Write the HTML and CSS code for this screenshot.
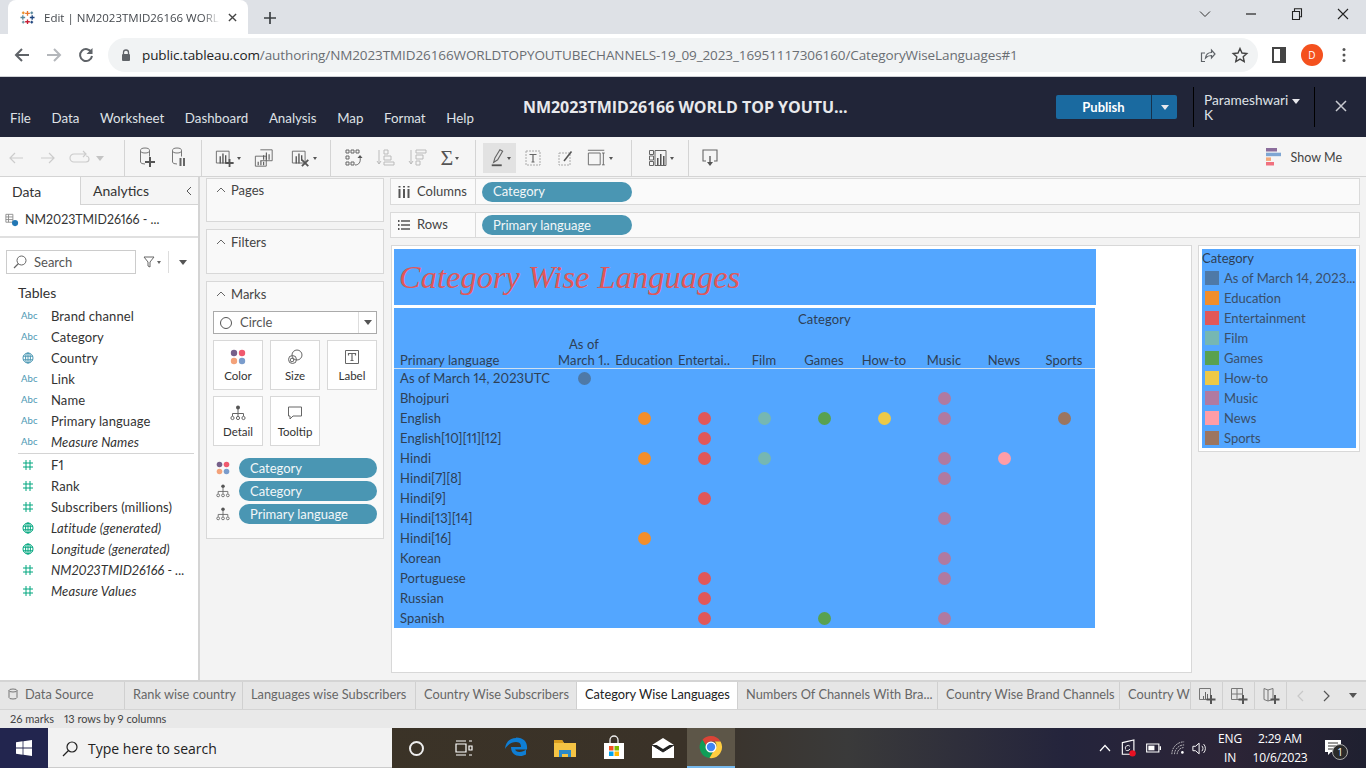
FILE: index.html
```html
<!DOCTYPE html>
<html lang="en">
<head>
<meta charset="utf-8">
<title>Edit | NM2023TMID26166 WORLD TOP YOUTUBE CHANNELS</title>
<link rel="stylesheet" href="styles.css">
</head>
<body>
<svg class="defs" aria-hidden="true">
  <symbol id="i-abc-hash" viewBox="0 0 12 12"><path d="M4 1v10M8 1v10M1 4h10M1 8h10" fill="none" stroke="currentColor" stroke-width="1"/></symbol>
  <symbol id="i-globe" viewBox="0 0 12 12"><g fill="none" stroke="currentColor" stroke-width="1"><circle cx="6" cy="6" r="5"/><ellipse cx="6" cy="6" rx="2.4" ry="5"/><path d="M1 4.200h10M1 7.800h10M6 1v10"/></g></symbol>
  <symbol id="i-color" viewBox="0 0 16 16"><circle cx="4" cy="4" r="3.200" fill="#76608a"/><circle cx="12" cy="4" r="3.200" fill="#f0596e"/><circle cx="4" cy="12" r="3.200" fill="#f3a27a"/><circle cx="12" cy="12" r="3.200" fill="#7a9ccc"/></symbol>
  <symbol id="i-detail" viewBox="0 0 16 16"><g fill="none" stroke="#666" stroke-width="1"><path d="M8 4v4M2.500 11V8.500h11V11M8 8v3"/><circle cx="2.500" cy="13" r="1.600"/><circle cx="8" cy="13" r="1.600"/><circle cx="13.500" cy="13" r="1.600"/></g><circle cx="8" cy="2.500" r="2" fill="#555"/></symbol>
  <symbol id="i-db" viewBox="0 0 16 22"><g fill="none" stroke="#777" stroke-width="1"><ellipse cx="6" cy="3.500" rx="4.500" ry="2.500"/><path d="M1.500 3.500v11.500q0 2 4.500 2M10.500 3.500v6"/></g></symbol>
</svg>

<header class="tabstrip">
  <div class="chrome-tab">
    <svg class="favicon" viewBox="0 0 16 16"><g fill="none" stroke-width="1.400"><path d="M8 1v5M5.500 3.500h5" stroke="#e8762b"/><path d="M8 10v5M5.500 12.500h5" stroke="#c72037"/><path d="M3 5.500v5M.5 8h5" stroke="#5b879b"/><path d="M13 5.500v5M10.500 8h5" stroke="#1f447e"/><path d="M3.500 1.500v3M2 3h3" stroke="#eb912b"/><path d="M12.500 1.500v3M11 3h3" stroke="#59879b"/><path d="M3.500 11.500v3M2 13h3" stroke="#7099a6"/><path d="M12.500 11.500v3M11 13h3" stroke="#1f457e"/></g></svg>
    <span class="chrome-tab-title">Edit | NM2023TMID26166 WORLD TOP YOUTUBE</span>
    <svg class="tab-x" viewBox="0 0 10 10"><path d="M1 1l8 8M9 1l-8 8" stroke="#444" stroke-width="1.500"/></svg>
  </div>
  <svg class="new-tab" viewBox="0 0 12 12"><path d="M6 0v12M0 6h12" stroke="#3c4043" stroke-width="1.700"/></svg>
  <div class="win-controls">
    <svg viewBox="0 0 12 12"><path d="M1 3.500l5 5 5-5" fill="none" stroke="#333"/></svg>
    <svg viewBox="0 0 12 12"><path d="M1 6h10" stroke="#222" stroke-width="1.200"/></svg>
    <svg viewBox="0 0 12 12"><path d="M1.500 3.500h7v8h-7zM3.500 3.500V.8h7v8H8.500" fill="none" stroke="#222" stroke-width="1.100"/></svg>
    <svg viewBox="0 0 12 12"><path d="M1 1l10 10M11 1L1 11" stroke="#222" stroke-width="1.100"/></svg>
  </div>
</header>

<nav class="addressbar">
  <svg class="nav-ic" viewBox="0 0 16 16"><path d="M15 8H2M8 2L2 8l6 6" fill="none" stroke="#5f6368" stroke-width="2"/></svg>
  <svg class="nav-ic" viewBox="0 0 16 16"><path d="M1 8h13M8 2l6 6-6 6" fill="none" stroke="#b4b7bb" stroke-width="2"/></svg>
  <svg class="nav-ic" viewBox="0 0 16 16"><path d="M13.500 5.500A6 6 0 1 0 14 9" fill="none" stroke="#5f6368" stroke-width="2"/><path d="M14.500 1v6h-6z" fill="#5f6368"/></svg>
  <div class="omnibox">
    <svg class="lock" viewBox="0 0 10 12"><path d="M2.500 5V3.500a2.500 2.500 0 0 1 5 0V5" fill="none" stroke="#5f6368" stroke-width="1.300"/><rect x="1" y="5" width="8" height="7" rx="1" fill="#5f6368"/></svg>
    <span class="url"><b>public.tableau.com</b>/authoring/NM2023TMID26166WORLDTOPYOUTUBECHANNELS-19_09_2023_16951117306160/CategoryWiseLanguages#1</span>
    <svg class="share" viewBox="0 0 16 16"><path d="M5 14.500H1.500V6H5M5.500 11c.5-4 3-5.500 6-5.500V3l3.500 4-3.500 4V8.500c-2.500 0-4.500.8-6 2.500z" fill="none" stroke="#5f6368" stroke-width="1.200"/></svg>
    <svg class="star" viewBox="0 0 16 16"><path d="M8 1.500l2 4.500 4.800.5-3.600 3.200 1 4.800L8 12.100l-4.200 2.400 1-4.800L1.200 6.500 6 6z" fill="none" stroke="#444" stroke-width="1.400"/></svg>
  </div>
  <svg class="side-ic" viewBox="0 0 14 16"><path d="M1 1h12v14H1z" fill="none" stroke="#444" stroke-width="2"/><path d="M8 1h5v14H8z" fill="#444"/></svg>
  <span class="avatar">D</span>
  <svg class="kebab" viewBox="0 0 4 16"><circle cx="2" cy="2.500" r="1.500"/><circle cx="2" cy="8" r="1.500"/><circle cx="2" cy="13.500" r="1.500"/></svg>
</nav>

<section class="appbar">
  <nav class="menu"><span>File</span><span>Data</span><span>Worksheet</span><span>Dashboard</span><span>Analysis</span><span>Map</span><span>Format</span><span>Help</span></nav>
  <h1 class="doc-title">NM2023TMID26166 WORLD TOP YOUTU...</h1>
  <div class="publish"><span class="publish-main">Publish</span><span class="publish-drop"><i class="tri tri-white"></i></span></div>
  <div class="user"><span>Parameshwari <i class="tri tri-white"></i></span><span>K</span></div>
  <svg class="app-close" viewBox="0 0 12 12"><path d="M1 1l10 10M11 1L1 11" stroke="#c8cad0" stroke-width="1.500"/></svg>
</section>

<section class="toolbar">
  <div class="tg tg1">
    <span class="tb"><svg viewBox="0 0 16 16"><path d="M15 8H2M7 3L2 8l5 5" fill="none" stroke="#ccc" stroke-width="1.200"/></svg></span>
    <span class="tb"><svg viewBox="0 0 16 16"><path d="M1 8h13M9 3l5 5-5 5" fill="none" stroke="#ccc" stroke-width="1.200"/></svg></span>
    <span class="tb"><svg class="wide" viewBox="0 0 20 16"><path d="M16 4H4a3 3 0 0 0 0 8h12a3 3 0 0 0 0-6M13 1l3 3-3 3" fill="none" stroke="#ccc" stroke-width="1.200"/></svg></span>
    <i class="tri tri-light"></i>
  </div>
  <div class="tg tg2">
    <span class="tb"><svg class="tall" viewBox="0 0 16 22"><use href="#i-db"/><path d="M11 10v10M6 15h10" stroke="#555" stroke-width="2"/></svg></span>
    <span class="tb"><svg class="tall" viewBox="0 0 16 22"><use href="#i-db"/><path d="M9.500 11v8M13 11v8" stroke="#666" stroke-width="2"/></svg></span>
  </div>
  <div class="tg tg3">
    <span class="tb tb-c"><svg class="big" viewBox="0 0 22 22"><path d="M1.500 3.500h14v13h-14z" fill="none" stroke="#666"/><path d="M5 9h1.500v8H5zM8 6h1.500v11H8zM11 8h1.500v9H11z" fill="#555"/><path d="M16 12v9M11.500 16.500h9" stroke="#555" stroke-width="2"/></svg><i class="tri tri-dark"></i></span>
    <span class="tb"><svg class="big" viewBox="0 0 22 22"><path d="M7 2h13v12H7M1.500 9h12v11h-12z" fill="#f5f5f5" stroke="#666"/><path d="M10 8h1.200v5H10zM13 5h1.200v8H13zM16 7h1.200v6H16zM4 15h1.200v4H4zM7 14h1.200v5H7zM10 15h1.200v4H10z" fill="#555"/></svg></span>
    <span class="tb tb-c"><svg class="big" viewBox="0 0 22 22"><path d="M1.500 3.500h14v13h-14z" fill="none" stroke="#666"/><path d="M5 9h1.500v8H5zM8 6h1.500v11H8zM11 8h1.500v6H11z" fill="#555"/><path d="M12 13l7 7M19 13l-7 7" stroke="#555" stroke-width="2"/></svg><i class="tri tri-dark"></i></span>
  </div>
  <div class="tg tg4">
    <span class="tb"><svg class="big" viewBox="0 0 20 20"><g fill="none" stroke="#666"><path d="M2 2h3v3H2zM7 2h3v3H7zM12 2h3v3h-3zM2 8h3v3H2zM2 14h3v3H2zM7 14h3v3H7z"/><path d="M11 17c4 0 6-3 5-8"/></g><path d="M13.500 10l2.500-3 2.500 3z" fill="#555"/></svg></span>
    <span class="tb"><svg class="big" viewBox="0 0 20 20"><g fill="none" stroke="#bbb"><path d="M3 2v14M1 13l2 3 2-3M8 2h4v4H8zM8 8h7v4H8zM8 14h10v3H8z"/></g></svg></span>
    <span class="tb"><svg class="big" viewBox="0 0 20 20"><g fill="none" stroke="#bbb"><path d="M3 2v14M1 13l2 3 2-3M8 2h10v3H8zM8 7h7v4H8zM8 13h4v4H8z"/></g></svg></span>
    <span class="tb tb-c"><span class="sigma">Σ</span><i class="tri tri-dark"></i></span>
  </div>
  <div class="tg tg5">
    <span class="tb tb-on tb-c"><svg class="big" viewBox="0 0 18 22"><path d="M3 16l1.500-5L10 2l3 1.500L7.500 13z" fill="none" stroke="#666" stroke-width="1.200"/><path d="M1 19h11" stroke="#555" stroke-width="2"/></svg><i class="tri tri-dark"></i></span>
    <span class="tb"><svg class="mid" viewBox="0 0 16 16"><path d="M1 1h14v14H1z" fill="none" stroke="#aaa" stroke-dasharray="2 1"/><path d="M4.500 4.500h7M8 4.500V12M6.500 12h3" fill="none" stroke="#666" stroke-width="1.200"/></svg></span>
    <span class="tb"><svg class="mid" viewBox="0 0 16 16"><path d="M1 3h11v12H1z" fill="none" stroke="#aaa" stroke-dasharray="2 1"/><path d="M6 11L13.500 1.500" stroke="#555" stroke-width="1.600"/></svg></span>
    <span class="tb tb-c tb-fit"><svg class="big" viewBox="0 0 22 20"><path d="M1 1.500h18" stroke="#666"/><path d="M1.500 4.500h13v13h-13zM18 4.500v13M16.500 4.500h3M16.500 17.500h3" fill="none" stroke="#666"/></svg><i class="tri tri-dark"></i></span>
  </div>
  <div class="tg tg6">
    <span class="tb tb-c"><svg class="big" viewBox="0 0 20 20"><path d="M1.500 2.500h4v4h-4zM1.500 8h4v4h-4zM1.500 13.500h4v4h-4zM7 2.500h11v15H7z" fill="none" stroke="#666"/><path d="M9 10h1.500v7H9zM12 6h1.500v11H12zM15 8h1.500v9H15z" fill="#555"/></svg><i class="tri tri-dark"></i></span>
  </div>
  <div class="tg tg7">
    <span class="tb"><svg class="big" viewBox="0 0 20 20"><path d="M5 13H2V2h14v11h-3" fill="none" stroke="#666" stroke-width="1.100"/><path d="M9 8v8" stroke="#666" stroke-width="1.500"/><path d="M6 14h6l-3 4z" fill="#555"/></svg></span>
  </div>
  <div class="showme">
    <svg viewBox="0 0 16 18"><path d="M0 0h11v3.500H0z" fill="#8b6d9c"/><path d="M0 4.700h15v3.500H0z" fill="#7ea6d3"/><path d="M0 9.400h5v3.500H0z" fill="#f3a87a"/><path d="M0 14h8v3.500H0z" fill="#f0707e"/></svg>
    <span>Show Me</span>
  </div>
</section>

<main class="workspace">
  <aside class="datapane">
    <div class="pane-tabs">
      <span class="pane-tab pane-tab-on">Data</span>
      <span class="pane-tab">Analytics<svg class="collapse" viewBox="0 0 6 10"><path d="M5 1L1 5l4 4" fill="none" stroke="#555"/></svg></span>
    </div>
    <div class="source">
      <svg viewBox="0 0 16 16"><g fill="none" stroke="#888"><path d="M1 1.500h8v9H1z"/><path d="M1 4.500h8M1 7.500h8M4 1.500v9"/></g><circle cx="11.500" cy="11.500" r="3.500" fill="#2277b4"/></svg>
      <span>NM2023TMID26166 - ...</span>
    </div>
    <div class="searchrow">
      <div class="searchbox">
        <svg viewBox="0 0 14 14"><circle cx="8.500" cy="5.500" r="4.500" fill="none" stroke="#666"/><path d="M5.500 8.500L1 13" stroke="#666" stroke-width="1.300"/></svg>
        <span>Search</span>
      </div>
      <svg class="funnel" viewBox="0 0 12 12"><path d="M1 1h10L7 6v5L5 10V6z" fill="none" stroke="#666"/></svg>
      <i class="tri tri-small"></i>
      <span class="vsep"></span>
      <i class="tri tri-dark2"></i>
    </div>
    <div class="tables">Tables</div>
    <ul class="fields">
      <li><span class="abc">Abc</span>Brand channel</li>
      <li><span class="abc">Abc</span>Category</li>
      <li><svg class="ficon blue"><use href="#i-globe"/></svg>Country</li>
      <li><span class="abc">Abc</span>Link</li>
      <li><span class="abc">Abc</span>Name</li>
      <li><span class="abc">Abc</span>Primary language</li>
      <li class="gen"><span class="abc">Abc</span>Measure Names</li>
    </ul>
    <ul class="fields fields-m">
      <li><svg class="ficon green"><use href="#i-abc-hash"/></svg>F1</li>
      <li><svg class="ficon green"><use href="#i-abc-hash"/></svg>Rank</li>
      <li><svg class="ficon green"><use href="#i-abc-hash"/></svg>Subscribers (millions)</li>
      <li class="gen"><svg class="ficon green"><use href="#i-globe"/></svg>Latitude (generated)</li>
      <li class="gen"><svg class="ficon green"><use href="#i-globe"/></svg>Longitude (generated)</li>
      <li class="gen"><svg class="ficon green"><use href="#i-abc-hash"/></svg>NM2023TMID26166 - ...</li>
      <li class="gen"><svg class="ficon green"><use href="#i-abc-hash"/></svg>Measure Values</li>
    </ul>
  </aside>

  <div class="cards">
    <section class="card card-pages"><h2><svg viewBox="0 0 10 6"><path d="M1 5l4-4 4 4" fill="none" stroke="#666"/></svg>Pages</h2></section>
    <section class="card card-filters"><h2><svg viewBox="0 0 10 6"><path d="M1 5l4-4 4 4" fill="none" stroke="#666"/></svg>Filters</h2></section>
    <section class="card card-marks">
      <h2><svg viewBox="0 0 10 6"><path d="M1 5l4-4 4 4" fill="none" stroke="#666"/></svg>Marks</h2>
      <div class="marktype"><span class="ring"></span><span class="marktype-l">Circle</span><span class="marktype-d"><i class="tri tri-dark2"></i></span></div>
      <div class="markbtns">
        <div class="markbtn"><svg viewBox="0 0 16 16"><use href="#i-color"/></svg>Color</div>
        <div class="markbtn"><svg viewBox="0 0 16 16"><g fill="none" stroke="#666"><circle cx="10" cy="6" r="5"/><circle cx="5.500" cy="10.500" r="4"/><circle cx="5" cy="11" r="1.800"/></g></svg>Size</div>
        <div class="markbtn"><svg viewBox="0 0 16 16"><path d="M1.500 1.500h13v13h-13z" fill="none" stroke="#666"/><path d="M4.500 6.500v-2h7v2M8 4.500v7M6.500 11.500h3" fill="none" stroke="#666" stroke-width="1.200"/></svg>Label</div>
        <div class="markbtn"><svg viewBox="0 0 16 16"><use href="#i-detail"/></svg>Detail</div>
        <div class="markbtn"><svg viewBox="0 0 16 16"><path d="M1.500 2h13v9H6l-3 3v-3H1.500z" fill="none" stroke="#666"/></svg>Tooltip</div>
      </div>
      <div class="encodings">
        <div class="encoding"><svg viewBox="0 0 16 16"><use href="#i-color"/></svg><span class="pill">Category</span></div>
        <div class="encoding"><svg viewBox="0 0 16 16"><use href="#i-detail"/></svg><span class="pill">Category</span></div>
        <div class="encoding"><svg viewBox="0 0 16 16"><use href="#i-detail"/></svg><span class="pill">Primary language</span></div>
      </div>
    </section>
  </div>

  <div class="sheet">
    <div class="shelf shelf-cols">
      <div class="shelf-l"><svg viewBox="0 0 12 12"><path d="M1.500 3v9M6 3v9M10.500 3v9" stroke="#555" stroke-width="2"/><path d="M.5 0h2v1.500h-2zM5 0h2v1.500H5zM9.500 0h2v1.500h-2z" fill="#555"/></svg><span>Columns</span></div>
      <span class="pill pill-shelf">Category</span>
    </div>
    <div class="shelf shelf-rows">
      <div class="shelf-l"><svg viewBox="0 0 12 12"><path d="M3 2h9M3 6h9M3 10h9" stroke="#555" stroke-width="1.500"/><path d="M0 1h1.500v2H0zM0 5h1.500v2H0zM0 9h1.500v2H0z" fill="#555"/></svg><span>Rows</span></div>
      <span class="pill pill-shelf">Primary language</span>
    </div>
    <div class="stage">
      <div class="view">
        <div class="title-band"><span>Category Wise Languages</span></div>
        <div class="viz">
          <div class="viz-top">Category</div>
          <div class="viz-head">
            <span class="rowhead">Primary language</span>
            <span>As of<br>March 1..</span><span>Education</span><span>Entertai..</span><span>Film</span><span>Games</span><span>How-to</span><span>Music</span><span>News</span><span>Sports</span>
          </div>
          <div class="vrow"><span class="rowhead">As of March 14, 2023UTC</span><i class="dot c1 k-asof"></i></div>
          <div class="vrow"><span class="rowhead">Bhojpuri</span><i class="dot c7 k-music"></i></div>
          <div class="vrow"><span class="rowhead">English</span><i class="dot c2 k-edu"></i><i class="dot c3 k-ent"></i><i class="dot c4 k-film"></i><i class="dot c5 k-games"></i><i class="dot c6 k-howto"></i><i class="dot c7 k-music"></i><i class="dot c9 k-sports"></i></div>
          <div class="vrow"><span class="rowhead">English[10][11][12]</span><i class="dot c3 k-ent"></i></div>
          <div class="vrow"><span class="rowhead">Hindi</span><i class="dot c2 k-edu"></i><i class="dot c3 k-ent"></i><i class="dot c4 k-film"></i><i class="dot c7 k-music"></i><i class="dot c8 k-news"></i></div>
          <div class="vrow"><span class="rowhead">Hindi[7][8]</span><i class="dot c7 k-music"></i></div>
          <div class="vrow"><span class="rowhead">Hindi[9]</span><i class="dot c3 k-ent"></i></div>
          <div class="vrow"><span class="rowhead">Hindi[13][14]</span><i class="dot c7 k-music"></i></div>
          <div class="vrow"><span class="rowhead">Hindi[16]</span><i class="dot c2 k-edu"></i></div>
          <div class="vrow"><span class="rowhead">Korean</span><i class="dot c7 k-music"></i></div>
          <div class="vrow"><span class="rowhead">Portuguese</span><i class="dot c3 k-ent"></i><i class="dot c7 k-music"></i></div>
          <div class="vrow"><span class="rowhead">Russian</span><i class="dot c3 k-ent"></i></div>
          <div class="vrow"><span class="rowhead">Spanish</span><i class="dot c3 k-ent"></i><i class="dot c5 k-games"></i><i class="dot c7 k-music"></i></div>
        </div>
      </div>
      <aside class="legend">
        <div class="legend-in">
          <div class="legend-t">Category</div>
          <div class="lrow"><i class="k-asof"></i>As of March 14, 2023...</div>
          <div class="lrow"><i class="k-edu"></i>Education</div>
          <div class="lrow"><i class="k-ent"></i>Entertainment</div>
          <div class="lrow"><i class="k-film"></i>Film</div>
          <div class="lrow"><i class="k-games"></i>Games</div>
          <div class="lrow"><i class="k-howto"></i>How-to</div>
          <div class="lrow"><i class="k-music"></i>Music</div>
          <div class="lrow"><i class="k-news"></i>News</div>
          <div class="lrow"><i class="k-sports"></i>Sports</div>
        </div>
      </aside>
    </div>
  </div>
</main>

<section class="sheettabs">
  <div class="stab s1"><svg viewBox="0 0 10 12"><path d="M1 2.500v7q0 1.500 4 1.500t4-1.500v-7M1 2.500q0-1.500 4-1.500t4 1.500-4 1.500-4-1.500z" fill="none" stroke="#777"/></svg>Data Source</div>
  <div class="stab s2">Rank wise country</div>
  <div class="stab s3">Languages wise Subscribers</div>
  <div class="stab s4">Country Wise Subscribers</div>
  <div class="stab s5 stab-on">Category Wise Languages</div>
  <div class="stab s6">Numbers Of Channels With Bra...</div>
  <div class="stab s7">Country Wise Brand Channels</div>
  <div class="stab s8">Country Wi</div>
  <div class="stab-ic"><svg viewBox="0 0 18 18"><path d="M1.500 1.500h11v11h-11z" fill="none" stroke="#777"/><path d="M5 9h1v3H5zM7 5h1v7H7zM9 7h1v5H9z" fill="#666"/><path d="M13 8v9M8.500 12.500h9" stroke="#555" stroke-width="2"/></svg></div>
  <div class="stab-ic"><svg viewBox="0 0 18 18"><path d="M1.500 1.500h11v11h-11zM1.500 7h11M7 1.500v11" fill="none" stroke="#777"/><path d="M13 8v9M8.500 12.500h9" stroke="#555" stroke-width="2"/></svg></div>
  <div class="stab-ic"><svg viewBox="0 0 18 18"><path d="M2 1.500l4 1.500 5-1.500v11l-5 1.500-4-1.500zM6 3v11" fill="none" stroke="#777"/><path d="M13 8v9M8.500 12.500h9" stroke="#555" stroke-width="2"/></svg></div>
  <svg class="tab-nav nav-a" viewBox="0 0 7 12"><path d="M6 1L1 6l5 5" fill="none" stroke="#c8c8c8" stroke-width="1.200"/></svg>
  <svg class="tab-nav nav-b" viewBox="0 0 7 12"><path d="M1 1l5 5-5 5" fill="none" stroke="#555" stroke-width="1.200"/></svg>
  <i class="tri tri-dark2 tab-more"></i>
</section>
<footer class="statusbar"><span>26 marks</span><span>13 rows by 9 columns</span></footer>

<section class="taskbar">
  <div class="start"><svg viewBox="0 0 16 16"><path d="M0 2.200l6.600-.9v6.300H0zM7.400 1.200L16 0v7.600H7.400zM0 8.400h6.600v6.300L0 13.800zM7.400 8.400H16V16l-8.600-1.200z" fill="#fff"/></svg></div>
  <div class="tsearch"><svg viewBox="0 0 16 16"><circle cx="10" cy="6" r="5" fill="none" stroke="#222" stroke-width="1.200"/><path d="M6.500 9.500L1 15" stroke="#222" stroke-width="1.300"/></svg><span>Type here to search</span></div>
  <div class="tapp tapp-sys"><span class="cortana"></span></div>
  <div class="tapp tapp-sys tapp-last"><svg class="t20" viewBox="0 0 18 18"><path d="M1 2h10M1 16h10M1 5h10v8H1zM14 2h3M14 7h3v4h-3zM14 16h3" fill="none" stroke="#fff" stroke-width="1.200"/></svg></div>
  <div class="tapp"><svg class="t26" viewBox="0 0 24 24"><path d="M12 2C5 2 1.500 7 1 13c3-5 7-7 11-7 4.500 0 5 3 5 5H7c0 6 4 9 9 9 2.500 0 4.500-.6 6-1.500v-5c-1.500 1.500-4 2.500-6.500 2.500s-4-1-4.300-2.500H23c.8-7-3-12-11-12z" fill="#0f7ed4"/></svg></div>
  <div class="tapp"><svg class="t26" viewBox="0 0 24 24"><path d="M1 4h8l2 3h12v14H1z" fill="#f4c344"/><path d="M1 4h8l2 3H1z" fill="#d99c1e"/><path d="M6 21v-7h12v7h-3v-3H9v3z" fill="#2a89c9"/></svg></div>
  <div class="tapp"><svg class="t26" viewBox="0 0 24 24"><path d="M8 7V4a4 4 0 0 1 8 0v3" fill="none" stroke="#eee" stroke-width="1.300"/><path d="M2 7h20v16H2z" fill="#fff"/><path d="M7 10h4.500v4.500H7z" fill="#f25022"/><path d="M12.500 10H17v4.500h-4.500z" fill="#7fba00"/><path d="M7 15.500h4.500V20H7z" fill="#00a4ef"/><path d="M12.500 15.500H17V20h-4.500z" fill="#ffb900"/></svg></div>
  <div class="tapp"><svg class="t26" viewBox="0 0 24 24"><path d="M1 9l11-7 11 7v13H1z" fill="#fff"/><path d="M1 9l11 7 11-7" fill="#222" stroke="#222"/><path d="M4 8l8-5 8 5-8 5z" fill="#fff"/></svg></div>
  <div class="tapp tapp-chrome">
    <svg class="t26" viewBox="0 0 24 24"><path d="M12 1a11 11 0 0 1 9.500 5.500H12a5.500 5.500 0 0 0-5.200 3.700L3.500 4.700A11 11 0 0 1 12 1z" fill="#db4437"/><path d="M3.500 4.700L8.200 13a5.500 5.500 0 0 0 5.500 4.300L10.500 23A11 11 0 0 1 3.500 4.700z" fill="#0f9d58"/><path d="M21.500 6.500A11 11 0 0 1 10.500 23l4.700-8a5.500 5.500 0 0 0 .6-8.500z" fill="#ffcd40"/><circle cx="12" cy="12" r="5.500" fill="#fff"/><circle cx="12" cy="12" r="4.200" fill="#4285f4"/></svg>
  </div>
  <div class="tray">
    <svg class="t-up" viewBox="0 0 12 8"><path d="M1 7l5-5.500L11 7" fill="none" stroke="#fff" stroke-width="1.200"/></svg>
    <svg class="t-sync" viewBox="0 0 18 20"><path d="M1.500 4l13-3v16h-13z" fill="none" stroke="#fff" stroke-width="1.300"/><path d="M5 11a3 3 0 0 1 5-3M10 11a3 3 0 0 1-5 1" fill="none" stroke="#fff"/><circle cx="13" cy="16" r="3.600" fill="#e81123"/></svg>
    <svg class="t-batt" viewBox="0 0 16 10"><path d="M.7.7h13v8.600H.7z" fill="none" stroke="#fff" stroke-width="1.200"/><path d="M2.500 2.500H9v5H2.500z" fill="#fff"/><path d="M14.500 3H16v4h-1.500z" fill="#fff"/></svg>
    <svg class="t-wifi" viewBox="0 0 16 16"><g fill="none" stroke="#ddd" stroke-width="1"><path d="M1 15A14 14 0 0 1 15 1M4 15A11 11 0 0 1 15 4.500M7 15a8 8 0 0 1 8-7.500" stroke-dasharray="2 1"/></g><circle cx="13" cy="13" r="1.500" fill="#fff"/></svg>
    <svg class="t-vol" viewBox="0 0 18 16"><path d="M1 5.500h3L8 2v12l-4-3.500H1z" fill="none" stroke="#fff" stroke-width="1.100"/><path d="M11 5a4 4 0 0 1 0 6M13 3a7 7 0 0 1 0 10" fill="none" stroke="#fff"/></svg>
    <div class="t-lang"><span>ENG</span><span>IN</span></div>
    <div class="t-clock"><span>2:29 AM</span><span>10/6/2023</span></div>
    <div class="t-notif"><svg viewBox="0 0 16 16"><path d="M0 0h16v12H6l-3 3v-3H0z" fill="#fff"/><path d="M3 3h10M3 6h10M3 9h7" stroke="#333"/></svg><span class="t-badge">1</span></div>
  </div>
</section>
</body>
</html>
```
FILE: styles.css
```css
* { box-sizing: border-box; }
html, body { margin: 0; padding: 0; }
body {
  width: 1366px; height: 768px; overflow: hidden;
  display: flex; flex-direction: column;
  font-family: "Lato", "Open Sans", sans-serif; font-size: 13px; color: #333; background: #fff;
  font-variant-numeric: proportional-nums;
}
.defs { display: none; }
ul { list-style: none; margin: 0; padding: 0; }
h1, h2 { margin: 0; font-weight: 400; }
i { font-style: normal; }
svg { display: block; flex: none; overflow: visible; }

/* triangles */
.tri { display: inline-block; width: 0; height: 0; border-style: solid; border-color: transparent; border-width: 4px 4px 0; flex: none; }
.tri-white { border-top-color: #e8e8ec; vertical-align: middle; border-width: 5px 4.500px 0; }
.tri-light { border-top-color: #c4c4c4; border-width: 5px 4px 0; }
.tri-dark { border-top-color: #555; border-width: 3px 2.500px 0; }
.tri-dark2 { border-top-color: #555; border-width: 5px 4.500px 0; }
.tri-small { border-top-color: #666; border-width: 3px 2.500px 0; margin-left: 2px; }

/* browser chrome */
.tabstrip { height: 34px; flex: none; background: #dee1e6; display: flex; align-items: flex-end; position: relative; padding-left: 8px; }
.chrome-tab { width: 240px; height: 34px; background: #fff; border-radius: 8px 8px 0 0; display: flex; align-items: center; padding-left: 12px; font: 11.500px "Open Sans", sans-serif; color: #45494e; }
.favicon { width: 15px; height: 15px; margin-right: 9px; flex: none; }
.chrome-tab-title { width: 176px; overflow: hidden; white-space: nowrap; -webkit-mask-image: linear-gradient(90deg, #000 90%, transparent); mask-image: linear-gradient(90deg, #000 90%, transparent); }
.tab-x { width: 9px; height: 9px; margin-left: 8px; }
.new-tab { width: 12px; height: 12px; margin: 0 0 10px 16px; }
.win-controls { margin-left: auto; display: flex; align-self: flex-start; padding-top: 8px; }
.win-controls svg { width: 12px; height: 12px; margin: 0 17px; }
.addressbar { height: 43px; flex: none; background: #fff; border-bottom: 1px solid #d0d2d6; display: flex; align-items: center; padding-left: 14px; }
.nav-ic { width: 16px; height: 16px; margin-right: 16px; }
.omnibox { margin-left: -2px; width: 1150px; height: 34px; border-radius: 17px; background: #f1f3f4; display: flex; align-items: center; padding-left: 13px; flex: none; }
.lock { width: 10px; height: 12px; margin-right: 11px; flex: none; }
.url { font: 13.500px "Open Sans", sans-serif; color: #6a6e73; white-space: nowrap; letter-spacing: -.1px; width: 1040px; overflow: hidden; flex: none; }
.url b { font-weight: 400; color: #222; }
.share { width: 16px; height: 16px; margin-left: 18px; }
.star { width: 16px; height: 16px; margin-left: 16px; }
.side-ic { width: 14px; height: 16px; margin-left: 14px; }
.avatar { width: 22px; height: 22px; border-radius: 50%; background: #f4511e; color: #fff; font: 10px "Open Sans", sans-serif; display: flex; align-items: center; justify-content: center; margin-left: 15px; flex: none; }
.kebab { width: 4px; height: 16px; margin-left: 19px; fill: #555; }

/* tableau header */
.appbar { height: 60px; flex: none; background: #212538; display: flex; position: relative; color: #dfe1e6; }
.menu { display: flex; gap: 20.700px; padding: 33px 0 0 10px; font-size: 13.300px; width: 523px; flex: none; }
.menu span { white-space: nowrap; }
.doc-title { font: 700 16px "Open Sans", sans-serif; color: #e8e9ec; padding-top: 19px; white-space: nowrap; width: 533px; flex: none; letter-spacing: -.04px; }
.publish { display: flex; height: 24px; margin-top: 18px; border-radius: 2px; overflow: hidden; background: #1a6aa0; color: #fff; font-weight: 700; flex: none; }
.publish-main { width: 96px; display: flex; align-items: center; justify-content: center; border-right: 1px solid #16324c; }
.publish-drop { width: 25px; display: flex; align-items: center; justify-content: center; }
.user { margin: 10px 0 0 16px; height: 40px; width: 122px; border: 1px solid #000; border-width: 0 1px; padding-left: 10px; font-size: 13.700px; line-height: 15px; display: flex; flex-direction: column; justify-content: center; white-space: nowrap; flex: none; }
.app-close { width: 12px; height: 12px; margin: 23px 0 0 20px; }

.toolbar { height: 40px; flex: none; background: #f5f5f5; display: flex; align-items: stretch; border-bottom: 1px solid #d4d4d4; padding-top: 3px; }
.tg { display: flex; align-items: center; border-right: 1px solid #d4d4d4; flex: none; }
.tg1 { width: 125px; }
.tg2 { width: 77px; padding-left: 6px; }
.tg3 { width: 129px; padding-left: 5px; }
.tg4 { width: 145px; padding-left: 7px; }
.tg5 { width: 156px; padding-left: 7px; }
.tg6 { width: 57px; padding-left: 7px; }
.tg7 { width: 50px; padding-left: 6px; border-right: 0; }
.tb { width: 32px; height: 30px; display: flex; align-items: center; justify-content: center; flex: none; }
.tb svg { width: 16px; height: 16px; }
.tb svg.wide { width: 20px; height: 16px; }
.tb svg.tall { width: 16px; height: 22px; }
.tb svg.big { width: 20px; height: 20px; }
.tb svg.mid { width: 16px; height: 16px; }
.tb-c .tri { margin-left: 2px; }
.tb-on.tb-c .tri { margin-left: -2px; }
.tg3 .tb { width: 38px; }
.tg3 .tb-c { padding-left: 3px; }
.tg5 .tb { width: 33px; }
.tg5 .tb-fit { padding-left: 3px; }
.tg6 .tb { width: 44px; }
.tb-on { background: #e2e2e2; }
.sigma { font: 22px "Liberation Serif", serif; color: #555; }
.showme { margin-left: auto; display: flex; align-items: center; gap: 9px; padding: 0 24px 2px 0; font-size: 12.500px; color: #444; }
.showme svg { width: 16px; height: 18px; }

/* main */
.workspace { height: 503px; flex: none; display: flex; background: #f3f3f3; overflow: hidden; }
.datapane { width: 200px; flex: none; background: #fff; border-right: 2px solid #d4d4d4; }
.pane-tabs { display: flex; height: 28px; font-size: 14px; }
.pane-tab { display: flex; align-items: center; }
.pane-tab:first-child { width: 80px; padding-left: 12px; }
.pane-tab:last-child { flex: 1; padding-left: 12px; background: #f5f5f5; border-left: 1px solid #d4d4d4; border-bottom: 1px solid #d4d4d4; position: relative; }
.collapse { width: 6px; height: 10px; position: absolute; right: 6px; top: 9px; }
.source { height: 33px; display: flex; align-items: center; gap: 6px; padding: 0 0 2px 5px; border-bottom: 2px solid #e0e0e0; font-size: 12.400px; }
.source svg { width: 14px; height: 14px; }
.searchrow { height: 24px; margin-top: 12px; padding-left: 6px; display: flex; align-items: center; }
.searchbox { width: 130px; height: 24px; border: 1px solid #ccc; display: flex; align-items: center; gap: 7px; padding-left: 6px; color: #555; }
.searchbox svg { width: 14px; height: 14px; }
.funnel { width: 12px; height: 12px; margin-left: 7px; }
.vsep { width: 1px; height: 22px; background: #ddd; margin: 0 10px 0 7px; }
.tables { font-size: 14px; padding: 10px 0 0 18px; height: 31px; }
.fields { margin-left: 18px; margin-right: 4px; letter-spacing: .1px; }
.fields li { height: 21px; display: flex; align-items: center; white-space: nowrap; }
.fields li.gen { font-style: italic; }
.fields-m { border-top: 1px solid #d4d4d4; margin-top: 1px; }
.abc { width: 33px; font-size: 9.500px; color: #4a97b3; padding-left: 3px; font-style: normal; flex: none; }
.ficon { width: 12px; height: 12px; margin: 0 17px 0 4px; }
.blue { color: #4a97b3; }
.green { color: #00a67e; }

.cards { width: 178px; flex: none; margin: 1px 0 0 6px; display: flex; flex-direction: column; gap: 7px; }
.card { background: #f9f9f9; border: 1px solid #d8d8d8; }
.card-pages { height: 44px; }
.card-filters { height: 45px; }
.card h2 { font-size: 13px; height: 22px; display: flex; align-items: center; gap: 5px; padding: 0 0 0 9px; color: #444; }
.card-filters h2, .card-marks h2 { padding-top: 2px; }
.card h2 svg { width: 10px; height: 6px; }
.card-marks { height: 258px; padding: 0 6px; }
.card-marks h2 { margin: 0 -6px 7px; }
.marktype { height: 23px; border: 1px solid #aaa; background: #fff; display: flex; align-items: center; }
.ring { width: 12px; height: 12px; border: 1px solid #555; border-radius: 50%; margin-left: 6px; }
.marktype-l { margin-left: 8px; flex: 1; color: #555; padding-bottom: 1px; }
.marktype-d { width: 18px; height: 21px; border-left: 1px solid #ddd; display: flex; align-items: center; justify-content: center; }
.markbtns { display: grid; grid-template-columns: repeat(3, 50px); gap: 6px 7px; margin-top: 6px; }
.markbtn { height: 50px; background: #fff; border: 1px solid #d8d8d8; display: flex; flex-direction: column; align-items: center; gap: 4px; padding-top: 8px; font-size: 11.500px; }
.markbtn svg { width: 16px; height: 16px; }
.encodings { margin-top: 12px; display: flex; flex-direction: column; gap: 3px; }
.encoding { display: flex; align-items: center; gap: 9px; padding-left: 3px; }
.encoding svg { width: 14px; height: 14px; }
.pill { width: 138px; height: 20px; border-radius: 10px; background: #4a96b3; color: #f2f6f8; padding-left: 11px; display: flex; align-items: center; flex: none; white-space: nowrap; }

.sheet { flex: 1; margin: 1px 6px 0 6px; display: flex; flex-direction: column; min-width: 0; }
.shelf { background: #fafafa; border: 1px solid #dadada; display: flex; align-items: center; }
.shelf-cols { height: 27px; margin-bottom: 7px; }
.shelf-rows { height: 26px; margin-bottom: 7px; }
.shelf-l { width: 85px; align-self: stretch; display: flex; align-items: center; gap: 7px; padding-left: 7px; border-right: 1px solid #dadada; color: #444; }
.shelf-l span { padding-bottom: 2px; }
.shelf-l svg { width: 12px; height: 12px; }
.pill-shelf { width: 150px; margin-left: 6px; padding-bottom: 1px; }
.stage { display: flex; gap: 6px; align-items: flex-start; padding-left: 1px; }
.view { width: 801px; height: 428px; background: #fff; border: 1px solid #d8d8d8; padding: 3px 0 0 2px; }
.title-band { width: 702px; height: 56px; background: #53a6ff; display: flex; align-items: center; padding-left: 5px; }
.title-band span { font: italic 32.500px cursive; color: #e15759; white-space: nowrap; }
.viz { width: 701px; height: 320px; margin-top: 3px; background: #53a6ff; color: #2e3f55; letter-spacing: .1px; }
.viz-top { height: 21px; padding-left: 160px; text-align: center; line-height: 22px; }
.viz-head { height: 40px; margin-bottom: -1px; display: grid; grid-template-columns: 160px repeat(9, 60px); align-items: end; text-align: center; border-bottom: 1px solid #cfe0f0; line-height: 16px; }
.viz-head span { white-space: nowrap; }
.rowhead { text-align: left; padding-left: 6px; white-space: nowrap; }
.vrow { height: 20px; display: grid; grid-template-columns: 160px repeat(9, 60px); align-items: center; }
.vrow .rowhead { grid-column: 1; grid-row: 1; }
.dot { width: 13px; height: 13px; border-radius: 50%; justify-self: center; grid-row: 1; }
.c1 { grid-column: 2; } .c2 { grid-column: 3; } .c3 { grid-column: 4; } .c4 { grid-column: 5; } .c5 { grid-column: 6; } .c6 { grid-column: 7; } .c7 { grid-column: 8; } .c8 { grid-column: 9; } .c9 { grid-column: 10; }
.k-asof { background: #4e79a7; }
.k-edu { background: #f28e2b; }
.k-ent { background: #e15759; }
.k-film { background: #76b7b2; }
.k-games { background: #59a14f; }
.k-howto { background: #edc948; }
.k-music { background: #b07aa1; }
.k-news { background: #ff9da7; }
.k-sports { background: #9c755f; }

.legend { width: 162px; height: 207px; background: #fff; border: 1px solid #d8d8d8; padding: 3px; flex: none; }
.legend-in { height: 199px; background: #53a6ff; color: #2e3f55; }
.legend-t { height: 19px; line-height: 18px; }
.lrow { height: 20px; display: flex; align-items: center; gap: 5px; padding-left: 3px; white-space: nowrap; color: #3a4f6a; }
.lrow i { width: 14px; height: 14px; flex: none; }

/* sheet tabs */
.sheettabs { height: 30px; flex: none; background: #e6e6e6; border-top: 2px solid #d4d4d4; border-bottom: 1px solid #d4d4d4; display: flex; align-items: stretch; position: relative; font-size: 12.800px; color: #666; }
.stab { display: flex; align-items: center; padding: 0 0 4px 8px; border-right: 1px solid #d0d0d0; white-space: nowrap; overflow: hidden; flex: none; }
.stab svg { width: 10px; height: 12px; margin-right: 7px; }
.s1 { width: 125px; } .s2 { width: 118px; } .s3 { width: 173px; } .s4 { width: 161px; }
.s5 { width: 161px; } .s6 { width: 200px; } .s7 { width: 182px; } .s8 { width: 71px; }
.stab-on { background: #fff; color: #222; }
.stab-ic { width: 32px; display: flex; align-items: center; justify-content: center; border-right: 1px solid #d0d0d0; flex: none; }
.stab-ic svg { width: 18px; height: 18px; }
.tab-nav { width: 7px; height: 12px; align-self: center; }
.nav-a { margin-left: 10px; }
.nav-b { margin-left: 19px; }
.tab-more { align-self: center; margin-left: 19px; }
.statusbar { height: 18px; flex: none; background: #e9e9e9; display: flex; gap: 10px; padding: 0 0 2px 10px; align-items: center; font-size: 11px; color: #444; letter-spacing: -.02px; }

/* taskbar */
.taskbar { height: 40px; flex: none; display: flex; align-items: stretch; color: #fff; background: linear-gradient(90deg, #3c3426 0%, #3a3228 50%, #3a3a3a 62%, #24243c 78%, #2c2436 90%, #1f2030 100%); }
.start { width: 48px; background: #22254e; display: flex; align-items: center; justify-content: center; flex: none; }
.start svg { width: 16px; height: 16px; }
.tsearch { width: 344px; background: #f2f2f2; color: #222; display: flex; align-items: center; gap: 10px; padding: 2px 0 0 14px; font: 14px "Open Sans", sans-serif; flex: none; border-bottom: 1px solid #ccc; }
.tsearch svg { width: 16px; height: 16px; }
.tapp { width: 49px; display: flex; align-items: center; justify-content: center; flex: none; }
.tapp-sys { width: 48px; }
.tapp-last { margin-right: 3px; }
.tapp-chrome { width: 48px; background: #5d5648; border-bottom: 2px solid #76b9ed; }
.cortana { width: 15px; height: 15px; border: 2.500px solid #eee; border-radius: 50%; }
.t20 { width: 18px; height: 18px; }
.t26 { width: 24px; height: 24px; }
.tray { margin-left: auto; display: flex; align-items: center; font: 12px "Open Sans", sans-serif; }
.t-up { width: 12px; height: 8px; margin-right: 9.500px; }
.t-sync { width: 16px; height: 20px; margin-right: 9px; }
.t-batt { width: 15px; height: 10px; margin-right: 10.500px; }
.t-wifi { width: 14px; height: 14px; margin-right: 7px; }
.t-vol { width: 16px; height: 15px; margin-right: 8px; }
.t-lang, .t-clock { display: flex; flex-direction: column; align-items: center; line-height: 19px; letter-spacing: -.2px; }
.t-lang { width: 28px; margin-right: 7px; }
.t-clock { width: 58px; margin-right: 16px; }
.t-notif { width: 41px; position: relative; }
.t-notif svg { width: 16px; height: 16px; }
.t-badge { position: absolute; left: 7px; top: 4px; width: 16px; height: 16px; border-radius: 50%; background: #2a2a2a; border: 1px solid #aaa; font-size: 10px; line-height: 14px; text-align: center; }
```
